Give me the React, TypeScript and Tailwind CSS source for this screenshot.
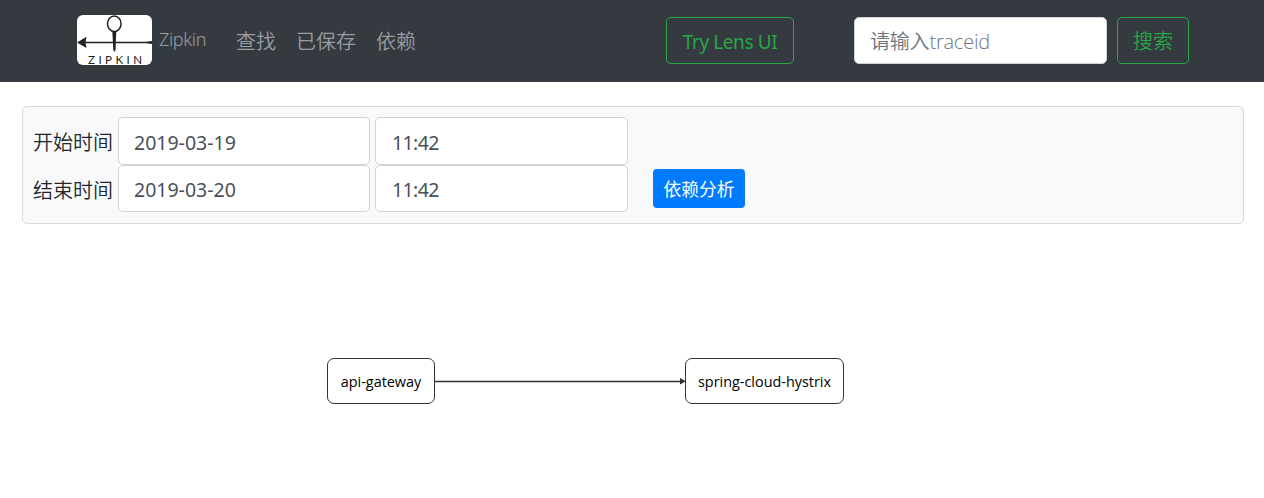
import React from "react";

const fieldClass =
  "block rounded-[5px] border border-[#ced4da] bg-white text-[19.5px] font-normal text-[#495057] outline-none";

function Logo() {
  return (
    <svg className="h-[50px] w-[75px] shrink-0 rounded-[6px] bg-white" viewBox="0 0 75 50">
      <ellipse cx="37.3" cy="8.8" rx="6.8" ry="7.7" fill="none" stroke="#222" strokeWidth="1.5" />
      <path d="M35.3 16H39.3L38.5 35L37.3 37L36.3 35Z" fill="#222" />
      <path d="M5 27.5H75" stroke="#222" strokeWidth="1.6" />
      <path d="M0 27.5L9.5 21.8L8.5 27.5L9.5 33Z" fill="#222" />
      <path d="M66 27.5L75 26V29Z" fill="#222" />
      <text x="11" y="49" textLength="54" fill="#222" fontSize="11.5" fontFamily="Lato, sans-serif">
        ZIPKIN
      </text>
    </svg>
  );
}

function NavBar() {
  return (
    <nav className="flex h-[82px] items-start bg-[#343a40] pl-[77px] text-[20px] leading-[30px] text-[#9a9da0]">
      <div className="flex w-[589px] items-start pt-[15px]">
        <Logo />
        <a className="mt-[9px] ml-[7px] w-[77px] text-[18px] font-light tracking-[-0.35px]">Zipkin</a>
        <div className="mt-[12px] flex gap-[20px] font-[350]">
          <a>查找</a>
          <a>已保存</a>
          <a>依赖</a>
        </div>
      </div>
      <button className="mt-[17px] h-[47px] w-[128px] rounded-[5px] border border-[#28a745] pt-[2px] text-[19px] tracking-[-0.4px] whitespace-nowrap text-[#28a745]">
        Try Lens UI
      </button>
      <input
        className="mt-[17px] ml-[60px] h-[47px] w-[253px] rounded-[5px] border border-[#ced4da] bg-white px-[15px] pt-[2px] font-['Open_Sans','Noto_Sans_CJK_SC',sans-serif] font-[350] tracking-[-0.2px] outline-none placeholder:text-[#6c757d]"
        placeholder="请输入traceid"
      />
      <button className="mt-[17px] ml-[10px] h-[47px] w-[72px] rounded-[5px] border border-[#28a745] pt-[2px] font-[350] text-[#28a745]">
        搜索
      </button>
    </nav>
  );
}

interface TimeRowProps {
  label: string;
  date: string;
  fieldSize: string;
  children?: React.ReactNode;
}

function TimeRow({ label, date, fieldSize, children }: TimeRowProps) {
  return (
    <div className="flex h-[47px] items-start">
      <label className="mt-[11px] w-[85px] text-[20px] leading-[30px] font-[350]">{label}</label>
      <input className={`${fieldClass} ${fieldSize} w-[252px] px-[15px]`} defaultValue={date} />
      <input
        className={`${fieldClass} ${fieldSize} ml-[5px] w-[253px] px-[16px] tracking-[-0.6px]`}
        defaultValue="11:42"
      />
      {children}
    </div>
  );
}

function ServiceNode({ name, className }: { name: string; className: string }) {
  return (
    <div
      className={`flex h-[46px] items-center justify-center rounded-[7px] border-[1.5px] border-[#333] bg-white pt-[1px] font-['Open_Sans',sans-serif] text-[14.4px] font-[370] whitespace-nowrap text-black ${className}`}
    >
      {name}
    </div>
  );
}

export default function App() {
  return (
    <div className="h-[498px] overflow-hidden bg-white font-['Noto_Sans','Noto_Sans_CJK_SC',sans-serif] text-[#212529]">
      <NavBar />
      <form className="mt-[24px] mr-[20px] ml-[22px] flex h-[118px] flex-col gap-[1px] rounded-[5px] border border-[#d7dadd] bg-[#f8f9fa] pt-[10px] pl-[10px]">
        <TimeRow label="开始时间" date="2019-03-19" fieldSize="h-[48px] pt-[3px]" />
        <TimeRow label="结束时间" date="2019-03-20" fieldSize="h-[47px] pt-[2px]">
          <button
            type="button"
            className="mt-[4px] ml-[25px] h-[39px] w-[92px] rounded-[4px] bg-[#007bff] pt-[2px] text-[17.7px] text-white"
          >
            依赖分析
          </button>
        </TimeRow>
      </form>
      <main className="flex items-center pt-[134px] pl-[327px]">
        <ServiceNode name="api-gateway" className="w-[108px]" />
        <svg className="h-[46px] w-[250px]" viewBox="0 0 250 46">
          <path d="M0 23.5H246" stroke="#333" strokeWidth="1.3" />
          <path d="M245 20L251 23.3L245 26.6Z" fill="#333" />
        </svg>
        <ServiceNode name="spring-cloud-hystrix" className="w-[159px]" />
      </main>
    </div>
  );
}
